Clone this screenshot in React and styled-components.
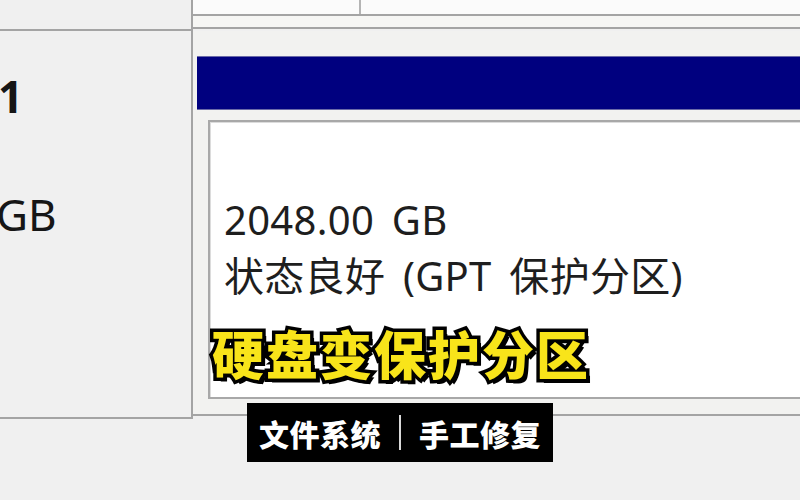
import React from "react";
import styled, { createGlobalStyle } from "styled-components";

const GlobalStyle = createGlobalStyle`
  html, body { margin: 0; padding: 0; background: #f0f0f0; }
  body {
    width: 800px; height: 500px; overflow: hidden;
    font-family: "Noto Sans CJK SC", "Noto Sans", sans-serif;
  }
`;

const Screen = styled.div`
  position: relative;
  width: 800px;
  height: 500px;
  overflow: hidden;
  background: #f0f0f0;
  display: flex;
  flex-direction: column;
`;

const DiskRow = styled.div`
  display: flex;
  flex: none;
  height: ${(p) => p.$height}px;
`;

const LabelCell = styled.div`
  box-sizing: border-box;
  width: 193px;
  flex: none;
  height: 100%;
  border-right: 2px solid #a4a4a4;
  border-bottom: 2px solid #a4a4a4;
  background: #f0f0f0;
  overflow: hidden;
  display: flex;
  flex-direction: column;
  padding-top: ${(p) => p.$padTop || 0}px;
  gap: ${(p) => p.$gap || 0}px;
`;

const LabelText = styled.div`
  font-family: "Noto Sans", "Noto Sans CJK SC", sans-serif;
  font-size: 44px;
  line-height: 56px;
  color: #161616;
  font-weight: ${(p) => (p.$bold ? 700 : 400)};
  margin-left: ${(p) => p.$shift || 0}px;
  white-space: nowrap;
`;

const VolumeArea = styled.div`
  box-sizing: border-box;
  flex: 1;
  min-width: 0;
  height: ${(p) => p.$height}px;
  border-bottom: 2px solid #a4a4a4;
  background: #f2f2f0;
  display: flex;
  flex-direction: column;
  padding: ${(p) => p.$pad || "0"};
`;

const PartitionStrip = styled.div`
  box-sizing: border-box;
  height: 16px;
  display: flex;
  border-bottom: 2px solid #a4a4a4;
  flex: none;
`;

const StripCell = styled.div`
  box-sizing: border-box;
  height: 100%;
  background: #fbfbfb;
  width: ${(p) => (p.$width ? `${p.$width}px` : "auto")};
  flex: ${(p) => (p.$width ? "none" : 1)};
  border-right: ${(p) => (p.$divider ? "2px solid #b4b4b4" : "none")};
`;

const Band = styled.div`
  box-sizing: border-box;
  height: 13px;
  flex: none;
  background: #f6f6f4;
  border-bottom: 2px solid #a4a4a4;
`;

const PartitionHeader = styled.div`
  height: 52px;
  flex: none;
  background: #00007f;
  box-shadow: 0 1px 0 #6a6aa8, 0 -1px 0 #6a6aa8;
`;

const PartitionBody = styled.div`
  box-sizing: border-box;
  flex: none;
  height: 279px;
  margin: 11px -4px 0 11px;
  background: #ffffff;
  border: 2px solid #a8a8a8;
  box-shadow: inset 1px 1px 0 #dcdcdc;
  padding: 70px 0 0 14px;
  display: flex;
  flex-direction: column;
`;

const InfoLine = styled.div`
  font-family: "Noto Sans", "Noto Sans CJK SC", sans-serif;
  font-size: 40px;
  line-height: 56px;
  word-spacing: 7px;
  letter-spacing: 0.3px;
  color: #1e1e1e;
  white-space: nowrap;
`;

const Title = styled.div`
  position: absolute;
  left: 212px;
  top: 318px;
  font-family: "Noto Sans CJK SC", sans-serif;
  font-weight: 900;
  font-size: 52px;
  line-height: 70px;
  letter-spacing: 2px;
  color: #f8e41a;
  -webkit-text-stroke: 7px #000;
  paint-order: stroke fill;
  text-shadow: 4px 4px 0 #000;
  white-space: nowrap;
`;

const Caption = styled.div`
  position: absolute;
  left: 247px;
  top: 403px;
  width: 306px;
  height: 59px;
  box-sizing: border-box;
  background: #000;
  display: flex;
  align-items: center;
  justify-content: center;
  gap: 18px;
`;

const CaptionText = styled.span`
  font-family: "Noto Sans CJK SC", sans-serif;
  font-weight: 900;
  font-size: 30px;
  line-height: 1;
  color: #fff;
  letter-spacing: 0.5px;
`;

const CaptionDivider = styled.span`
  width: 2px;
  height: 35px;
  background: #d8d8d8;
`;

export default function App() {
  return (
    <>
      <GlobalStyle />
      <Screen>
        <DiskRow $height={31}>
          <LabelCell />
          <VolumeArea $height={29} $pad="0">
            <PartitionStrip>
              <StripCell $width={168} $divider />
              <StripCell />
            </PartitionStrip>
            <Band />
          </VolumeArea>
        </DiskRow>

        <DiskRow $height={388}>
          <LabelCell $padTop={37} $gap={62}>
            <LabelText $bold $shift={-2}>1</LabelText>
            <LabelText $shift={-4}>GB</LabelText>
          </LabelCell>
          <VolumeArea $height={385} $pad="26px 0 0 4px">
            <PartitionHeader />
            <PartitionBody>
              <InfoLine>2048.00 GB</InfoLine>
              <InfoLine>状态良好 (GPT 保护分区)</InfoLine>
            </PartitionBody>
          </VolumeArea>
        </DiskRow>

        <Title>硬盘变保护分区</Title>
        <Caption>
          <CaptionText>文件系统</CaptionText>
          <CaptionDivider />
          <CaptionText>手工修复</CaptionText>
        </Caption>
      </Screen>
    </>
  );
}
